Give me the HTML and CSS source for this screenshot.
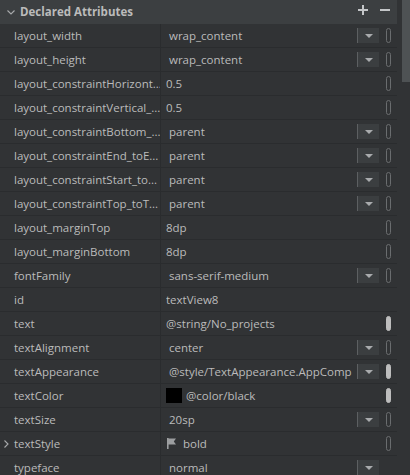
FILE: index.html
```html
<!DOCTYPE html>
<html>
<head>
<meta charset="utf-8">
<link rel="stylesheet" href="styles.css">
</head>
<body>
<div class="panel">
  <div class="main">
    <div class="header">
      <svg class="hchev" width="8" height="5" viewBox="0 0 8 5"><path d="M0.5 0.5 L4 4 L7.5 0.5" fill="none" stroke="#a8aaac" stroke-width="1.1"/></svg>
      <span class="htitle">Declared Attributes</span>
      <span class="hbtns">
        <svg width="10" height="10" viewBox="0 0 10 10"><path d="M0 5 H10 M5 0 V10" stroke="#c4c6c8" stroke-width="2"/></svg>
        <svg width="10" height="10" viewBox="0 0 10 10"><path d="M0 5 H10" stroke="#c4c6c8" stroke-width="2"/></svg>
      </span>
    </div>
    <div class="rows">
      <div class="row"><div class="name">layout_width</div><div class="val"><span class="txt dd">wrap_content</span><span class="combo"><i></i></span><span class="pill"></span></div></div>
      <div class="row"><div class="name">layout_height</div><div class="val"><span class="txt dd">wrap_content</span><span class="combo"><i></i></span><span class="pill"></span></div></div>
      <div class="row"><div class="name">layout_constraintHorizont...</div><div class="val"><span class="txt">0.5</span><span class="pill"></span></div></div>
      <div class="row"><div class="name">layout_constraintVertical_...</div><div class="val"><span class="txt">0.5</span><span class="pill"></span></div></div>
      <div class="row"><div class="name">layout_constraintBottom_...</div><div class="val"><span class="txt dd">parent</span><span class="combo"><i></i></span><span class="pill"></span></div></div>
      <div class="row"><div class="name">layout_constraintEnd_toE...</div><div class="val"><span class="txt dd">parent</span><span class="combo"><i></i></span><span class="pill"></span></div></div>
      <div class="row"><div class="name">layout_constraintStart_to...</div><div class="val"><span class="txt dd">parent</span><span class="combo"><i></i></span><span class="pill"></span></div></div>
      <div class="row"><div class="name">layout_constraintTop_toT...</div><div class="val"><span class="txt dd">parent</span><span class="combo"><i></i></span><span class="pill"></span></div></div>
      <div class="row"><div class="name">layout_marginTop</div><div class="val"><span class="txt">8dp</span><span class="pill"></span></div></div>
      <div class="row"><div class="name">layout_marginBottom</div><div class="val"><span class="txt">8dp</span><span class="pill"></span></div></div>
      <div class="row"><div class="name">fontFamily</div><div class="val"><span class="txt dd">sans-serif-medium</span><span class="combo"><i></i></span><span class="pill"></span></div></div>
      <div class="row"><div class="name">id</div><div class="val"><span class="txt">textView8</span></div></div>
      <div class="row"><div class="name">text</div><div class="val"><span class="txt">@string/No_projects</span><span class="pill filled"></span></div></div>
      <div class="row"><div class="name">textAlignment</div><div class="val"><span class="txt dd">center</span><span class="combo"><i></i></span><span class="pill"></span></div></div>
      <div class="row"><div class="name">textAppearance</div><div class="val"><span class="txt dd">@style/TextAppearance.AppComp</span><span class="combo"><i></i></span><span class="pill filled"></span></div></div>
      <div class="row"><div class="name">textColor</div><div class="val"><span class="swatch"></span><span class="txt sw">@color/black</span><span class="pill filled"></span></div></div>
      <div class="row"><div class="name">textSize</div><div class="val"><span class="txt dd">20sp</span><span class="combo"><i></i></span><span class="pill"></span></div></div>
      <div class="row"><div class="name has-exp"><svg class="rchev" width="5" height="8" viewBox="0 0 5 8"><path d="M0.5 0.5 L4 4 L0.5 7.5" fill="none" stroke="#a8aaac" stroke-width="1.1"/></svg>textStyle</div><div class="val"><svg class="flag" width="9" height="11" viewBox="0 0 9 11"><path d="M0 0 H1.6 V11 H0 Z M1.6 0.5 H9 L6.8 3.5 L9 6.5 H1.6 Z" fill="#9c9ea0"/></svg><span class="txt fl">bold</span><span class="pill"></span></div></div>
      <div class="row"><div class="name">typeface</div><div class="val"><span class="txt dd">normal</span><span class="combo"><i></i></span><span class="nopill"></span></div></div>
    </div>
  </div>
  <div class="scroll"><div class="thumb"></div></div>
</div>
</body>
</html>
```
FILE: styles.css
```css
html, body {
  margin: 0;
  padding: 0;
  background: #313335;
  height: 100%;
  overflow: hidden;
}
body {
  font-family: "Open Sans", "Noto Sans", sans-serif;
  font-size: 11.5px;
  color: #bbbbbb;
}
.panel {
  display: flex;
  width: 410px;
  height: 475px;
  overflow: hidden;
}
.main {
  width: 397px;
  display: flex;
  flex-direction: column;
}
.header {
  flex: none;
  height: 24px;
  background: #3c3f41;
  display: flex;
  align-items: center;
  box-sizing: border-box;
}
.hchev {
  margin-left: 7px;
  margin-right: 5px;
  margin-top: 1px;
}
.htitle {
  font-weight: bold;
  font-size: 11.5px;
  color: #bbbbbb;
  flex: 1;
  margin-top: -1px;
}
.hbtns {
  display: flex;
  gap: 12px;
  margin-right: 7px;
  margin-top: -5px;
}
.hbtns svg {
  display: block;
}
.rows {
  flex: none;
  display: flex;
  flex-direction: column;
}
.row {
  flex: none;
  height: 24px;
  box-sizing: border-box;
  border-bottom: 1px solid #2a2c2e;
  display: flex;
}
.name {
  width: 161px;
  box-sizing: border-box;
  border-right: 1px solid #2a2c2e;
  padding-left: 14px;
  display: flex;
  align-items: center;
  white-space: nowrap;
  overflow: hidden;
  position: relative;
}
.rchev {
  position: absolute;
  left: 4px;
  top: 8px;
}
.val {
  flex: 1;
  display: flex;
  align-items: center;
  padding-left: 5px;
  padding-right: 6px;
  min-width: 0;
}
.txt {
  flex: 1;
  white-space: nowrap;
  overflow: hidden;
  min-width: 0;
}
.txt.dd {
  padding-left: 3px;
}
.txt.sw {
  padding-left: 4px;
}
.txt.fl {
  padding-left: 7px;
}
.swatch {
  width: 16px;
  height: 15px;
  background: #000;
  flex: none;
}
.flag {
  margin-left: 1px;
  flex: none;
}
.combo {
  flex: none;
  width: 21px;
  height: 15px;
  border-left: 1px solid #5d6062;
  background: #3b3e40;
  margin-left: 5px;
  display: flex;
  align-items: center;
  justify-content: center;
}
.combo i {
  display: block;
  width: 0;
  height: 0;
  border-left: 4px solid transparent;
  border-right: 4px solid transparent;
  border-top: 4px solid #a9abad;
}
.pill {
  flex: none;
  width: 5px;
  height: 15px;
  box-sizing: border-box;
  border: 1px solid #6a6d6f;
  border-radius: 3px;
  margin-left: 7px;
}
.pill.filled {
  background: #bdbdbd;
  border-color: #bdbdbd;
}
.nopill {
  flex: none;
  width: 5px;
  margin-left: 7px;
}
.scroll {
  width: 13px;
  display: flex;
  justify-content: flex-end;
}
.thumb {
  width: 8px;
  height: 82px;
  background: #4e5254;
}
```
